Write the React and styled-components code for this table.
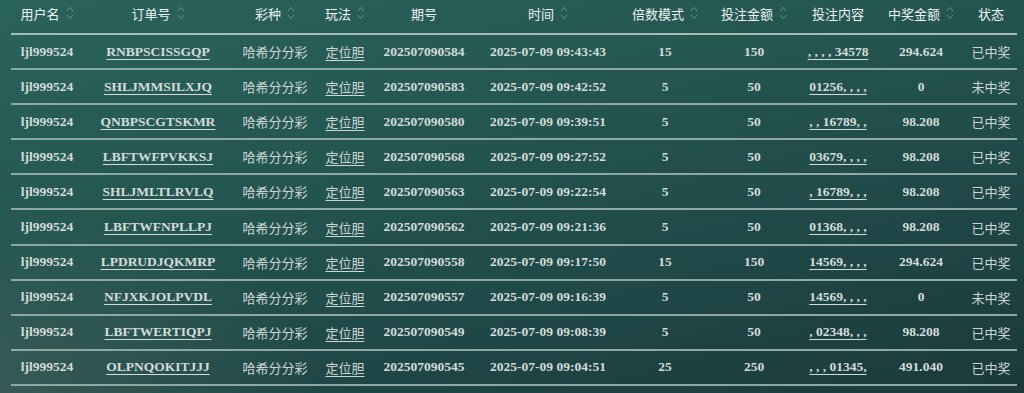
import React from "react";
import styled, { createGlobalStyle } from "styled-components";

const Global = createGlobalStyle`
  html, body { margin: 0; padding: 0; }
  body {
    background: #1f4846;
    font-family: "Liberation Serif", "Noto Sans CJK SC", serif;
  }
`;

const Page = styled.div`
  min-height: 100vh;
  box-sizing: border-box;
  padding-left: 11px;
  background:
    radial-gradient(ellipse 45% 70% at 0% 100%, rgba(110, 125, 112, 0.28), transparent 70%),
    linear-gradient(165deg, #2a635c 0%, #255751 35%, #1f4747 70%, #1b393a 100%);
  overflow: hidden;
`;

const Table = styled.div`
  width: 1006px;
`;

const COLS = "72px 150px 84px 56px 102px 146px 88px 90px 78px 88px 52px";

const HeadRow = styled.div`
  display: grid;
  grid-template-columns: ${COLS};
  height: 35px;
  padding-bottom: 7px;
  box-sizing: border-box;
  border-bottom: 2px solid #a7bbb7;
  align-items: center;
`;

const HeadCell = styled.div`
  display: flex;
  align-items: center;
  justify-content: center;
  gap: 6px;
  font-family: "Noto Sans CJK SC", "Noto Sans", sans-serif;
  font-size: 13px;
  color: #eef3f2;
  white-space: nowrap;
`;

const Row = styled.div`
  display: grid;
  grid-template-columns: ${COLS};
  height: 35.1px;
  box-sizing: border-box;
  border-bottom: 2px solid #8ea8a3;
  align-items: center;
`;

const Cell = styled.div`
  text-align: center;
  white-space: pre;
  color: ${(p) => (p.$cn ? "#cdd6d4" : "#d3dbd9")};
  font-size: ${(p) => (p.$cn ? "13px" : "13.5px")};
  font-family: ${(p) =>
    p.$cn ? `"Noto Sans CJK SC", "Noto Sans", sans-serif` : `"Liberation Serif", "Noto Sans CJK SC", serif`};
  font-weight: ${(p) => (p.$cn ? 400 : 700)};
  text-decoration: ${(p) => (p.$link ? "underline" : "none")};
  text-underline-offset: 3px;
  text-decoration-thickness: 1px;
`;

const SortIcon = () => (
  <svg width="8" height="16" viewBox="0 0 8 16" fill="none" stroke="rgba(200,220,216,0.4)" strokeWidth="1">
    <path d="M1 6 L4 2.5 L7 6" />
    <path d="M1 10 L4 13.5 L7 10" />
  </svg>
);

const headers = [
  ["用户名", true],
  ["订单号", true],
  ["彩种", true],
  ["玩法", true],
  ["期号", false],
  ["时间", true],
  ["倍数模式", true],
  ["投注金额", true],
  ["投注内容", false],
  ["中奖金额", true],
  ["状态", false],
];

const rows = [
  ["RNBPSCISSGQP", "202507090584", "2025-07-09 09:43:43", "15", "150", ", , , , 34578", "294.624", "已中奖"],
  ["SHLJMMSILXJQ", "202507090583", "2025-07-09 09:42:52", "5", "50", "01256, , , ,", "0", "未中奖"],
  ["QNBPSCGTSKMR", "202507090580", "2025-07-09 09:39:51", "5", "50", ", , 16789, ,", "98.208", "已中奖"],
  ["LBFTWFPVKKSJ", "202507090568", "2025-07-09 09:27:52", "5", "50", "03679, , , ,", "98.208", "已中奖"],
  ["SHLJMLTLRVLQ", "202507090563", "2025-07-09 09:22:54", "5", "50", ", 16789, , ,", "98.208", "已中奖"],
  ["LBFTWFNPLLPJ", "202507090562", "2025-07-09 09:21:36", "5", "50", "01368, , , ,", "98.208", "已中奖"],
  ["LPDRUDJQKMRP", "202507090558", "2025-07-09 09:17:50", "15", "150", "14569, , , ,", "294.624", "已中奖"],
  ["NFJXKJOLPVDL", "202507090557", "2025-07-09 09:16:39", "5", "50", "14569, , , ,", "0", "未中奖"],
  ["LBFTWERTIQPJ", "202507090549", "2025-07-09 09:08:39", "5", "50", ", 02348, , ,", "98.208", "已中奖"],
  ["OLPNQOKITJJJ", "202507090545", "2025-07-09 09:04:51", "25", "250", ", , , 01345,", "491.040", "已中奖"],
];

export default function App() {
  return (
    <>
      <Global />
      <Page>
        <Table>
          <HeadRow>
            {headers.map(([h, sort]) => (
              <HeadCell key={h}>
                <span>{h}</span>
                {sort && <SortIcon />}
              </HeadCell>
            ))}
          </HeadRow>
          {rows.map((r) => (
            <Row key={r[0]}>
              <Cell>ljl999524</Cell>
              <Cell $link>{r[0]}</Cell>
              <Cell $cn>哈希分分彩</Cell>
              <Cell $cn $link>定位胆</Cell>
              <Cell>{r[1]}</Cell>
              <Cell>{r[2]}</Cell>
              <Cell>{r[3]}</Cell>
              <Cell>{r[4]}</Cell>
              <Cell $link>{r[5]}</Cell>
              <Cell>{r[6]}</Cell>
              <Cell $cn>{r[7]}</Cell>
            </Row>
          ))}
        </Table>
      </Page>
    </>
  );
}
